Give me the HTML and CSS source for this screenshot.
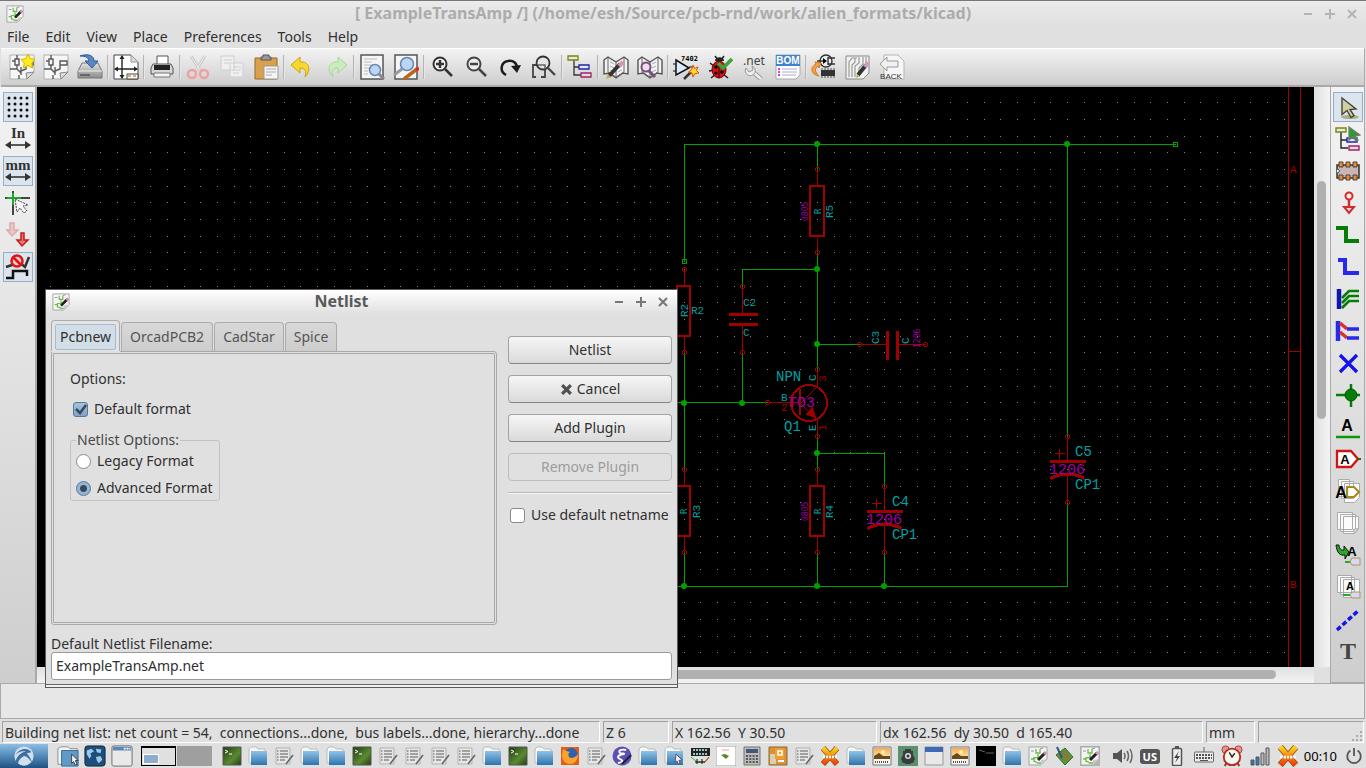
FILE: index.html
```html
<!DOCTYPE html>
<html lang="en">
<head>
<meta charset="utf-8">
<title>[ ExampleTransAmp /]</title>
<link rel="stylesheet" href="styles.css">
</head>
<body>
<svg class="defs" aria-hidden="true">
  <defs>
    <linearGradient id="gFolder" x1="0" y1="0" x2="0" y2="1"><stop offset="0" stop-color="#8fc3e6"/><stop offset="1" stop-color="#2f74ad"/></linearGradient>
    <linearGradient id="gTerm" x1="0" y1="0" x2="1" y2="1"><stop offset="0" stop-color="#1d3a12"/><stop offset=".6" stop-color="#5c8a30"/><stop offset="1" stop-color="#213d14"/></linearGradient>
    <linearGradient id="gX" x1="0" y1="0" x2="0" y2="1"><stop offset="0" stop-color="#ffd21a"/><stop offset="1" stop-color="#f03a10"/></linearGradient>
    <linearGradient id="gSky" x1="0" y1="0" x2="0" y2="1"><stop offset="0" stop-color="#f3a95c"/><stop offset="1" stop-color="#fbe3a0"/></linearGradient>
    <linearGradient id="gDisk" x1="0" y1="0" x2="0" y2="1"><stop offset="0" stop-color="#e2e2e2"/><stop offset="1" stop-color="#8c8c8c"/></linearGradient>
  </defs>
  <symbol id="kicad" viewBox="0 0 20 20"><path d="M1 1h18v12l-6 6H1z" fill="#f4f4f2" stroke="#a3a3a3"/><path d="M19 13l-6 6v-5z" fill="#ccc"/><path d="M8 3v4h4V3M10 8v3M6 11v5M6 13H3M6 12l5-1M6 15l4 2h3" fill="none" stroke="#6cba4c" stroke-width="1.300"/><path d="M12 3l3-1M3 5h3" stroke="#8b8bd0"/><path d="M10 14l7-7" stroke="#222" stroke-width="3"/><path d="M16 8l2-2" stroke="#d68bb4" stroke-width="3"/></symbol>
  <symbol id="sheet" viewBox="0 0 26 26"><path d="M1 1h24v17l-7 7H1z" fill="#f6f6f6" stroke="#b0b0b0"/><path d="M25 18l-7 7-1-6z" fill="#ddd" stroke="#888"/><path d="M3 7h3M8 1v4M6 5h4v6H6zM8 11v4M1 15h7l4 4M12 13v8M12 17l5-2V9M17 7h7v4h-7zM10 25v-4" fill="none" stroke="#5a5a5a" stroke-width="1.400"/></symbol>
  <symbol id="new" viewBox="0 0 26 26"><use href="#sheet" width="26" height="26"/><path d="M19 0l2.400 4.700 5 .7-3.700 3.600.9 5-4.600-2.500-4.600 2.500.9-5L12 5.400l5-.7z" fill="#ffee1c" stroke="#d9b300"/></symbol>
  <symbol id="save" viewBox="0 0 26 26"><path d="M5 9h16l4 8v7H1v-7z" fill="url(#gDisk)" stroke="#777"/><path d="M1 17h24" stroke="#eee"/><path d="M3 20h10v2H3z" fill="#666"/><path d="M3 2c9-3 14 0 14 5h4l-6 7-7-7h4c0-3-3-5-9-5z" fill="#5b87c0" stroke="#2c5a98"/></symbol>
  <symbol id="page" viewBox="0 0 26 26"><path d="M1 1h17l7 7v17H1z" fill="#fff" stroke="#444"/><path d="M18 1v7h7" fill="#ddd" stroke="#999"/><path d="M9 2v22M2 15h22" stroke="#222" stroke-width="1.400"/><path d="M9 1L6.500 5h5zM9 25l-2.500-4h5zM1 15l4-2.500v5zM25 15l-4-2.500v5z" fill="#222"/><path d="M14 20h11v5H14z" fill="#fff" stroke="#542"/><path d="M15 22h9" stroke="#b44" stroke-dasharray="3 2"/></symbol>
  <symbol id="print" viewBox="0 0 26 26"><path d="M8 2h11v10H8z" fill="#fff" stroke="#555"/><path d="M4 10h18l2 4v6H2v-6z" fill="#d8d8d8" stroke="#555"/><path d="M5 11h16v5H5z" fill="#222"/><path d="M5 19h16v4H5z" fill="#f5f5f5" stroke="#777"/></symbol>
  <symbol id="cut" viewBox="0 0 26 26"><path d="M6 2l10 16M20 2L10 18" stroke="#c9c9c9" stroke-width="3"/><path d="M6 2l10 16M20 2L10 18" stroke="#eee"/><circle cx="7" cy="20" r="4" fill="none" stroke="#f0a0a0" stroke-width="2.500"/><circle cx="19" cy="20" r="4" fill="none" stroke="#f0a0a0" stroke-width="2.500"/></symbol>
  <symbol id="copy" viewBox="0 0 26 26"><g fill="#efefef" stroke="#cfcfcf"><path d="M2 2h13v14H2zM11 9h13v14H11z"/><path d="M5 6h8M5 9h5M14 13h8M14 16h8M14 19h6"/></g></symbol>
  <symbol id="paste" viewBox="0 0 26 26"><path d="M2 4h22v21H2z" fill="#d9a14e" stroke="#94692a"/><path d="M8 6V3h2V1h6v2h2v3z" fill="#999" stroke="#555"/><path d="M11 12h14v13H11z" fill="#f5f5f5" stroke="#999"/><path d="M13 15h10M13 18h10M13 21h6" stroke="#aaa"/></symbol>
  <symbol id="undo" viewBox="0 0 26 26"><path d="M2 11l9-8v5c9-1 12 8 5 15 2-6 0-9-5-9v5z" fill="#f7d92c" stroke="#c9a214"/></symbol>
  <symbol id="redo" viewBox="0 0 26 26"><path d="M24 11l-9-8v5C6 7 3 16 10 23c-2-6 0-9 5-9v5z" fill="#c9ecb9" stroke="#a8d59a"/></symbol>
  <symbol id="find" viewBox="0 0 26 26"><path d="M2 1h22v24H2z" fill="#f5f5f5" stroke="#555" stroke-width="1.500"/><path d="M5 5h13M5 8h8M5 11h12M5 14h5M5 17h4M5 20h4" stroke="#bbb"/><circle cx="16" cy="16" r="5.500" fill="#bcd6f2" stroke="#6686b8" stroke-width="1.500"/><path d="M20 20l5 5" stroke="#888" stroke-width="3"/></symbol>
  <symbol id="replace" viewBox="0 0 26 26"><path d="M2 1h22v24H2z" fill="#f5f5f5" stroke="#555" stroke-width="1.500"/><path d="M9 15l-8 6" stroke="#999" stroke-width="3"/><circle cx="14" cy="10" r="6.500" fill="#bcd6f2" stroke="#6686b8" stroke-width="1.500"/><path d="M11 25l13-10" stroke="#b9671c" stroke-width="3.500"/><path d="M23 16l3-2" stroke="#e22" stroke-width="3.500"/></symbol>
  <symbol id="zin" viewBox="0 0 26 26"><circle cx="11" cy="10" r="6.500" fill="#f5f5f5" stroke="#333" stroke-width="2"/><path d="M16 15l7 7" stroke="#333" stroke-width="2.500"/><path d="M11 6v8M7 10h8" stroke="#333" stroke-width="2.500"/></symbol>
  <symbol id="zout" viewBox="0 0 26 26"><circle cx="11" cy="10" r="6.500" fill="#eee" stroke="#444" stroke-width="2"/><path d="M16 15l7 7" stroke="#444" stroke-width="2.500"/><path d="M7 10h8" stroke="#444" stroke-width="2.500"/></symbol>
  <symbol id="redraw" viewBox="0 0 26 26"><path d="M9 21C2 17 4 8 11 7c5-1 9 2 9 7" fill="none" stroke="#1b1b1b" stroke-width="2.500"/><path d="M14 12l10-1-4 8z" fill="#1b1b1b"/></symbol>
  <symbol id="fit" viewBox="0 0 26 26"><path d="M5 23H2V11h4M10 23h4V11" fill="none" stroke="#444" stroke-width="1.800"/><circle cx="12" cy="9" r="6.500" fill="#e6e6e6" fill-opacity=".8" stroke="#333" stroke-width="1.800"/><path d="M17 14l7 7" stroke="#444" stroke-width="2.300"/><path d="M7 11h7v4" fill="none" stroke="#666" stroke-width="1.500"/></symbol>
  <symbol id="tree" viewBox="0 0 26 26"><path d="M7 6v15h7M7 13h5" fill="none" stroke="#333" stroke-width="1.300"/><path d="M1 2h10v4H1z" fill="#dceaf7" stroke="#848400" stroke-width="1.300"/><path d="M12 11h10v4H12z" fill="#dceaf7" stroke="#2424a4" stroke-width="1.300"/><path d="M14 19h10v4H14z" fill="#dfdcf0" stroke="#a4245c" stroke-width="1.300"/></symbol>
  <symbol id="book" viewBox="0 0 26 26"><path d="M1 6l4-3 8 5 8-5 4 3v14l-5-1-7 5-7-5-5 1z" fill="#f2f2f2" stroke="#555" stroke-width="1.400"/><path d="M13 8v15M5 4v14l8 5 8-5V4" fill="none" stroke="#666"/><path d="M7 8l4 2M7 12l4 2M7 16l4 2M19 8l-4 2M19 12l-4 2M19 16l-4 2" stroke="#aaa"/></symbol>
  <symbol id="libedit" viewBox="0 0 26 26"><use href="#book" width="26" height="26"/><path d="M6 22L17 10" stroke="#333" stroke-width="4"/><path d="M16 12l4-4" stroke="#d891b7" stroke-width="4"/><path d="M3 25l2-5 3 3z" fill="#b6ad3a"/></symbol>
  <symbol id="libview" viewBox="0 0 26 26"><use href="#book" width="26" height="26"/><circle cx="9" cy="13" r="4.500" fill="#e8e0ea" stroke="#7b4f7b" stroke-width="2"/><path d="M12 17l6 6" stroke="#7b4f7b" stroke-width="3"/></symbol>
  <symbol id="annot" viewBox="0 0 26 26"><path d="M0 10h4M0 17h4M16 13h5" stroke="#111"/><path d="M3 6l13 8-13 7z" fill="#dceaff" stroke="#111" stroke-width="1.500"/><path d="M11 25l8-8" stroke="#333" stroke-width="2.500"/><path d="M20 11l1.500 3.500L25 13l-1.500 3.500L26 19l-4 .5L20 23l-1-4-3.500-1 3-2z" fill="#ffdf2c" stroke="#e04a12"/></symbol>
  <symbol id="bug" viewBox="0 0 26 26"><path d="M3 9l5 4M2 17l6-1M4 24l5-4M21 24l-5-4M8 2l3 4M17 2l-3 4" stroke="#222" stroke-width="1.500"/><ellipse cx="12" cy="15.500" rx="7" ry="8.500" fill="#d31414" stroke="#600"/><path d="M8 7c0-5 9-5 9 0z" fill="#222"/><path d="M12 7v17" stroke="#300"/><circle cx="9" cy="13" r="1.800"/><circle cx="15" cy="18" r="1.800"/><circle cx="9" cy="19" r="1.500"/><path d="M11 9l5 5 9-9" fill="none" stroke="#3aa53a" stroke-width="3.500"/></symbol>
  <symbol id="net" viewBox="0 0 26 26"><path d="M11 17l9 8" stroke="#999" stroke-width="4.500"/><path d="M11 17l9 8" stroke="#f0f0f0" stroke-width="2.500"/><path d="M5 14a5 5 0 1 0 6-2l1 4-4 2z" fill="#eee" stroke="#999"/></symbol>
  <symbol id="bom" viewBox="0 0 26 26"><path d="M1 1h24v20l-4 4H1z" fill="#fff" stroke="#aaa"/><path d="M1 1h24v11H1z" fill="#3f82cf"/><path d="M7 15h15M7 18h15M7 21h14" stroke="#aac"/><path d="M3 15h2M3 18h2M3 21h2" stroke="#c0c" stroke-width="1.500"/></symbol>
  <symbol id="cvpcb" viewBox="0 0 26 26"><circle cx="15" cy="7" r="6" fill="#eee" stroke="#333" stroke-width="1.400"/><path d="M6 7h8M17 3v8M24 4h-7M24 10h-7" fill="none" stroke="#333" stroke-width="1.400"/><path d="M12 4l4 3-4 3z"/><path d="M10 16h14v6H10z" fill="#333"/><path d="M11 22v2M14 22v2M17 22v2M20 22v2M23 22v2M11 14v2M14 14v2M17 14v2M20 14v2M23 14v2" stroke="#555"/><path d="M8 22c-9-2-9-9-3-12l-1-2 6 1-2 5-1-2c-4 3-3 6 1 10z" fill="#f0a04c" stroke="#d57814"/></symbol>
  <symbol id="pcbnew" viewBox="0 0 26 26"><path d="M1 2h23v17l-6 6H1z" fill="#f2f2f0" stroke="#888"/><path d="M4 23V8l3-4h5M7 23V11l3-3V4M10 23V12l4-3V3M14 23V14l4-4V3M21 3v6" fill="none" stroke="#999" stroke-width="1.200"/><path d="M13 21l8-10" stroke="#333" stroke-width="4"/><path d="M20 13l3-5" stroke="#cf9ac0" stroke-width="4"/><path d="M11 24l1-4 3 2z" fill="#b6ad3a"/></symbol>
  <symbol id="back" viewBox="0 0 26 26"><path d="M5 1h14l6 6v18H5z" fill="#f6f6f6" stroke="#b5b5b5"/><path d="M1 10l7-7v4h11v6H8v4z" fill="#f0f0f0" stroke="#999"/></symbol>

  <symbol id="grid" viewBox="0 0 26 26"><path d="M4 4h20M4 10h20M4 16h20M4 22h20" stroke="#111" stroke-width="3" stroke-linecap="round" stroke-dasharray="0 6"/></symbol>
  <symbol id="unit" viewBox="0 0 26 26"><path d="M4 19h18" stroke="#333" stroke-width="1.600"/><path d="M0 19l6-4v8zM26 19l-6-4v8z" fill="#333"/></symbol>
  <symbol id="cross" viewBox="0 0 26 26"><path d="M8 1v24M0 8h25" stroke="#444" stroke-width="2"/><path d="M8 3v12M2 8h14" stroke="#1fa62e" stroke-width="2"/><path d="M10 9l13 6-5 1 4 5-3 2-4-5-3 4z" fill="#f5f5f5" stroke="#444" stroke-dasharray="2 1"/></symbol>
  <symbol id="hidden" viewBox="0 0 26 26"><g opacity=".3"><path d="M5 1h4v7h4l-6 6-5-6h3z" fill="#e77" stroke="#c11c1c" stroke-width="1.500"/></g><path d="M16 11h3v7h4l-6 6-5-6h4z" fill="#e77" stroke="#c11c1c" stroke-width="1.500"/></symbol>
  <symbol id="anyang" viewBox="0 0 26 26"><path d="M1 13l6-2 7-3 6 5 4-10" fill="none" stroke="#333" stroke-width="2.500"/><circle cx="12" cy="7" r="5.500" fill="#eecccc" stroke="#e01414" stroke-width="2.500"/><path d="M8 3l8 8" stroke="#e01414" stroke-width="2.500"/><path d="M1 24h7v-7h14v5" fill="none" stroke="#111" stroke-width="2.500"/></symbol>

  <symbol id="arrow" viewBox="0 0 26 26"><ellipse cx="15" cy="23" rx="9" ry="2" fill="#a9ae7d"/><path d="M7 4l14 11-6 .5 4 6-3 2-4-7-5 4z" fill="#cfd0a2" stroke="#44443a" stroke-width="1.400"/></symbol>
  <symbol id="hier" viewBox="0 0 26 26"><path d="M6 5v17h7M6 14h6" fill="none" stroke="#222" stroke-width="1.400"/><path d="M1 2h10v4H1z" fill="#dceaf7" stroke="#848400" stroke-width="1.400"/><path d="M12 12h10v4H12z" fill="#dceaf7" stroke="#2424a4" stroke-width="1.400"/><path d="M14 20h10v4H14z" fill="#dfdcf0" stroke="#a4245c" stroke-width="1.400"/><path d="M14 1l11 8-5 1 3 4-2 1-3-4-4 3z" fill="#25a02c" stroke="#777" stroke-width="1.300"/></symbol>
  <symbol id="comp" viewBox="0 0 26 26"><path d="M2 7h22v13H2z" fill="#c9b5b5" stroke="#333" stroke-width="1.500"/><g fill="#f08a24" stroke="#444"><path d="M4 4h4v5H4zM11 4h4v5h-4zM18 4h4v5h-4zM4 17h4v5H4zM11 17h4v5h-4zM18 17h4v5h-4z"/></g><path d="M2 11c3 0 3 4 0 4" fill="#fff" stroke="#333"/></symbol>
  <symbol id="power" viewBox="0 0 26 26"><circle cx="14" cy="6" r="3.500" fill="#fbe9e9" stroke="#d22d2d" stroke-width="2"/><path d="M14 10v8" stroke="#d22d2d" stroke-width="2.500"/><path d="M9 17h10l-5 6z" fill="#dde" stroke="#d22d2d" stroke-width="2"/></symbol>
  <symbol id="wire" viewBox="0 0 26 26"><path d="M1 6h10v13h13" fill="none" stroke="#067d06" stroke-width="4"/></symbol>
  <symbol id="bus" viewBox="0 0 26 26"><path d="M3 6h7v13h14" fill="none" stroke="#2929ee" stroke-width="4"/></symbol>
  <symbol id="w2b" viewBox="0 0 26 26"><path d="M4 3v20" stroke="#1414b4" stroke-width="4.500"/><path d="M7 12l7-7h10M7 17l7-7h10M7 22l7-7h10" fill="none" stroke="#067d06" stroke-width="2.700"/></symbol>
  <symbol id="b2b" viewBox="0 0 26 26"><path d="M3 3v20" stroke="#2929ee" stroke-width="4.500"/><path d="M5 5l7 6M5 14l7 6" stroke="#d93030" stroke-width="3.500"/><path d="M12 11h12M12 20h12" stroke="#2929ee" stroke-width="3.500"/></symbol>
  <symbol id="noconn" viewBox="0 0 26 26"><path d="M5 5l17 17M22 5L5 22" stroke="#1010f0" stroke-width="3.200"/></symbol>
  <symbol id="junc" viewBox="0 0 26 26"><path d="M1 13h24M16 2v23" stroke="#067d06" stroke-width="2.500"/><circle cx="16" cy="13" r="6" fill="#067d06" stroke="#045404"/></symbol>
  <symbol id="label" viewBox="0 0 26 26"><path d="M1 23h24" stroke="#0a980a" stroke-width="2.500"/></symbol>
  <symbol id="glabel" viewBox="0 0 26 26"><path d="M2 5h14l7 8-7 8H2z" fill="#fff" stroke="#d01414" stroke-width="2.300"/><path d="M23 13h3" stroke="#067d06" stroke-width="2"/></symbol>
  <symbol id="hlabel" viewBox="0 0 26 26"><path d="M3.500 1.500h11v17h-11zM6.500 3.500h12v17h-12zM9.500 5.500h15v14l-5 5h-10z" fill="#fcfcfc" stroke="#aaa"/><path d="M12 9h7l5 5-5 5h-7z" fill="#fff" stroke="#a88a20" stroke-width="2.200"/></symbol>
  <symbol id="sheets" viewBox="0 0 26 26"><path d="M2.500 2.500h15v17h-15zM5.500 4.500h15v17h-15zM8.500 6.500h15v12l-4 5h-11z" fill="#fcfcfc" stroke="#aaa"/><path d="M23.500 18.500l-4 5-1-4z" fill="#ddd" stroke="#aaa"/></symbol>
  <symbol id="import" viewBox="0 0 26 26"><path d="M1 3c1 8 4 11 9 10v4l4-7-5-6v4C6 9 4 6 4 3z" fill="#28a828" stroke="#111"/><path d="M10 20h8" stroke="#28a828" stroke-width="2"/><path d="M17 16h8v7h-8l-2-3z" fill="#d8d8f6" stroke="#a89a50"/></symbol>
  <symbol id="spin" viewBox="0 0 26 26"><path d="M2.500 1.500h14v17h-14zM5.500 3.500h14v17h-14zM8.500 5.500h16v18h-16z" fill="#fcfcfc" stroke="#aaa"/><path d="M8 21h9" stroke="#28a828" stroke-width="2"/><path d="M17 18h8v6h-8l-2-3z" fill="#d8d8f6" stroke="#a89a50"/></symbol>
  <symbol id="dash" viewBox="0 0 26 26"><path d="M2 24L24 4" stroke="#1515ee" stroke-width="3.500" stroke-dasharray="5 2.500"/></symbol>

  <symbol id="term" viewBox="0 0 20 20"><path d="M1 1h18v18H1z" fill="url(#gTerm)" stroke="#555"/><path d="M3 4l3 1.500L3 7M7 8h3" fill="none" stroke="#fff"/></symbol>
  <symbol id="black" viewBox="0 0 20 20"><path d="M0 0h20v20H0z" fill="#000"/><path d="M3 4l6 2M10 7h8" stroke="#666"/></symbol>
  <symbol id="folder" viewBox="0 0 20 20"><path d="M1 17V3l2-2h5l2 2h7v14z" fill="#f6f6f6" stroke="#bbb"/><path d="M3 5h16v14H3z" fill="url(#gFolder)"/></symbol>
  <symbol id="folderc" viewBox="0 0 20 20"><use href="#folder" width="20" height="20"/><path d="M12 8l6 6-3 .5 1 3-2 .5-1-3-2 1z" fill="#eee" stroke="#557"/></symbol>
  <symbol id="note" viewBox="0 0 20 20"><path d="M2 2h14v16H2z" fill="#e6e6e6" stroke="#b3b3b3"/><path d="M6 5h8M6 8h8M6 11h8M6 14h5" stroke="#8a8a8a" stroke-width="1.300"/><path d="M3 5h1.500M3 8h1.500M3 11h1.500M3 14h1.500" stroke="#555"/><path d="M12 18l7-9" stroke="#666" stroke-width="1.600"/></symbol>
  <symbol id="fox" viewBox="0 0 20 20"><path d="M1 1h18v18H1z" fill="#e75a1c"/><circle cx="11" cy="9" r="7" fill="#2d62b0"/><path d="M3 3c3 2 4 2 7 3-2 1-2 3-1 5 2 2 6 1 9-3 0 6-3 10-8 10S2 14 2 9z" fill="#f9a32a"/></symbol>
  <symbol id="emacs" viewBox="0 0 20 20"><circle cx="10" cy="10" r="9.500" fill="#5a4fb5"/><path d="M14 4c-6-1-8 1-6 3 2 1 5 0 4 1-6 1-8 3-4 5s3 3-2 4" fill="none" stroke="#fff" stroke-width="1.800"/><path d="M10 18l9-9" stroke="#223" stroke-width="2"/></symbol>
  <symbol id="chip" viewBox="0 0 20 20"><path d="M1 2h19v8H1z" fill="#222"/><path d="M3 4h15M3 8h15" stroke="#bff" stroke-width="1.500" stroke-dasharray="2 1"/><path d="M1 11l6 5h8l4-5" fill="none" stroke="#2b2"/><path d="M15 16l4-5" stroke="#d22"/><path d="M7 13v5M12 13v5M5 16h10" stroke="#111"/></symbol>
  <symbol id="white" viewBox="0 0 20 20"><path d="M0 0h20v20H0z" fill="#fff" stroke="#999"/><path d="M6 4h7" stroke="#e99"/><path d="M5 9l4-1 4 2-3 3z" fill="#5a8a2c"/></symbol>
  <symbol id="calc" viewBox="0 0 20 20"><path d="M2 1h16v18H2z" fill="#bbb" stroke="#777"/><path d="M4 3h12v4H4z" fill="#3f5a78"/><path d="M4 10h13M4 13h13M4 16h13" stroke="#555" stroke-width="2" stroke-dasharray="2 1.300"/></symbol>
  <symbol id="orange" viewBox="0 0 20 20"><path d="M1 1h18v18H1z" fill="#d9923a" stroke="#8c6a35"/><path d="M2 8h6v10H2z" fill="#dccfae"/><path d="M7 2h9v11H7z" fill="#f0a030"/><path d="M10 5h4v4h-4z" fill="none" stroke="#fff" stroke-width="1.500"/><path d="M10 15h6" stroke="#fff" stroke-width="2"/></symbol>
  <symbol id="xcircuit" viewBox="0 0 20 20"><path d="M3 2l14 16M17 2L3 18" stroke="#8a5a10" stroke-width="6"/><path d="M3 2l14 16M17 2L3 18" stroke="url(#gX)" stroke-width="4.500"/><path d="M3 11h14" stroke="#fff" stroke-width="2.500" stroke-dasharray="2 1"/></symbol>
  <symbol id="pic" viewBox="0 0 20 20"><path d="M1 1h18v18H1z" fill="#f3f3f3" stroke="#777"/><path d="M2 2h16v9H2z" fill="url(#gSky)"/><circle cx="11" cy="6" r="2" fill="#fff3a8"/><path d="M2 10l5-3 4 3h7v3H2z" fill="#6b4a18"/><path d="M3 16h14" stroke="#555" stroke-width="2" stroke-dasharray="1 1"/></symbol>
  <symbol id="green" viewBox="0 0 20 20"><path d="M0 0h20v20H0z" fill="#5c8f6d"/><path d="M5 9V5h2V3h6v2h2v4l2 4-2 4h-2v1H7v-1H5l-2-4z" fill="#363f3b"/><circle cx="10" cy="10" r="3" fill="#ddd"/><circle cx="10" cy="10" r="1.500" fill="#333"/></symbol>
  <symbol id="win" viewBox="0 0 20 20"><path d="M1 1h18v18H1z" fill="#e8e8e8" stroke="#999"/><path d="M1 1h18v5H1z" fill="#3e69b4"/></symbol>
  <symbol id="pcb" viewBox="0 0 20 20"><path d="M2 9l9-7 8 9-8 8z" fill="#5d913b" stroke="#3e6a26"/><path d="M6 10l9 1M9 6l6 8" stroke="#a96b32" stroke-width="1.500"/><path d="M3 1l5 11" stroke="#34567d" stroke-width="2"/></symbol>
  <symbol id="files" viewBox="0 0 24 24"><path d="M1 21V4l3-2h8l2 2h8v17z" fill="#f5f5f5" stroke="#888"/><path d="M5 6h18v17H5z" fill="#5f9ac8" stroke="#2e6898"/><path d="M16 10v10l2-2 2 4 2-1-2-4h3z" fill="#fff" stroke="#333"/></symbol>
  <symbol id="globe" viewBox="0 0 24 24"><rect x="1" y="1" width="22" height="22" rx="3" fill="#1d4f7d" stroke="#123"/><path d="M3 6l5-2 3 3-4 2 1 3-2 3-3-5zM13 4l6 1-1 4-4-1zM13 13l5-1 2 4-4 4-2-3z" fill="#9fc8e2"/></symbol>
  <symbol id="window" viewBox="0 0 24 24"><rect x="1" y="1" width="22" height="22" rx="2" fill="#e9e9e9" stroke="#666"/><path d="M2 2h20v4H2z" fill="#5d88b4"/><path d="M14 4h7" stroke="#fff" stroke-width="2" stroke-dasharray="2 1"/></symbol>
  <symbol id="lubuntu" viewBox="0 0 24 24"><circle cx="12" cy="12" r="10.500" fill="#cfe0ef"/><path d="M2 19C5 11 9 8 14 7c-5-1-9 1-11 4 3-7 13-9 17-3l-5 1c3 3 5 7 6 11-3-5-6-8-9-8-4 2-6 5-7 9z" fill="#3f6f9f"/></symbol>
  <symbol id="speaker" viewBox="0 0 20 20"><path d="M0 7h4l5-4v14l-5-4H0z" fill="#555"/><path d="M11 7q2 3 0 6M14 5q3 5 0 10M17 3q4 7 0 14" fill="none" stroke="#666" stroke-width="1.500"/></symbol>
  <symbol id="battery" viewBox="0 0 20 20"><path d="M8 0h4v3H8z" fill="#555"/><rect x="5.500" y="2.500" width="9" height="17" rx="1" fill="#eee" stroke="#555" stroke-width="1.500"/><path d="M12 5l-5 7h3l-2 5 5-7h-3z" fill="#444"/></symbol>
  <symbol id="kbd" viewBox="0 0 20 20"><path d="M10 6V1" stroke="#666"/><rect x=".5" y="6" width="19" height="10" rx="1" fill="#eee" stroke="#666"/><path d="M2 9h16M2 12h16" stroke="#555" stroke-width="1.800" stroke-dasharray="2 1"/><path d="M6 14.500h8" stroke="#555"/></symbol>
  <symbol id="alarm" viewBox="0 0 24 24"><circle cx="5" cy="5" r="4" fill="#d99" stroke="#b33"/><circle cx="19" cy="5" r="4" fill="#d99" stroke="#b33"/><path d="M6 20l-2 3M18 20l2 3" stroke="#a22" stroke-width="2"/><circle cx="12" cy="13" r="9" fill="#fbf5f0" stroke="#b02e22" stroke-width="2"/><path d="M9 8l3 5 3-4" fill="none" stroke="#222" stroke-width="1.500"/></symbol>
  <symbol id="signal" viewBox="0 0 20 20"><g stroke="#555"><path d="M1 14h3v5H1zM6 11h3v8H6z" fill="#3f74c0"/><path d="M11 7h3v12h-3zM16 2h3v17h-3z" fill="#bbb"/></g></symbol>
  <symbol id="off" viewBox="0 0 20 20"><path d="M6 4a7.500 7.500 0 1 0 8 0" fill="none" stroke="#555" stroke-width="2"/><path d="M10 1v9" stroke="#555" stroke-width="2"/></symbol>
  <symbol id="wmin" viewBox="0 0 12 12"><path d="M2 6h8" stroke="currentColor" stroke-width="2"/></symbol>
  <symbol id="wmax" viewBox="0 0 12 12"><path d="M1 6h10M6 1v10" stroke="currentColor" stroke-width="2"/></symbol>
  <symbol id="wclose" viewBox="0 0 12 12"><path d="M2 2l8 8M10 2l-8 8" stroke="currentColor" stroke-width="2"/></symbol>
  <symbol id="cancel" viewBox="0 0 12 12"><path d="M2 2l8 8M10 2l-8 8" stroke="#505050" stroke-width="3"/></symbol>
</svg>

<header class="titlebar">
  <svg class="app-icon"><use href="#kicad"/></svg>
  <h1>[ ExampleTransAmp /] (/home/esh/Source/pcb-rnd/work/alien_formats/kicad)</h1>
  <div class="win-buttons">
    <button aria-label="Minimize"><svg><use href="#wmin"/></svg></button>
    <button aria-label="Maximize"><svg><use href="#wmax"/></svg></button>
    <button aria-label="Close"><svg><use href="#wclose"/></svg></button>
  </div>
</header>

<nav class="menubar">
  <button>File</button><button>Edit</button><button>View</button><button>Place</button><button>Preferences</button><button>Tools</button><button>Help</button>
</nav>

<div class="toolbar">
  <button aria-label="New"><svg><use href="#new"/></svg></button>
  <button aria-label="Open"><svg><use href="#sheet"/></svg></button>
  <button aria-label="Save"><svg><use href="#save"/></svg></button>
  <i></i>
  <button aria-label="Page settings"><svg><use href="#page"/></svg></button>
  <i></i>
  <button aria-label="Print"><svg><use href="#print"/></svg></button>
  <i></i>
  <button aria-label="Cut"><svg><use href="#cut"/></svg></button>
  <button aria-label="Copy"><svg><use href="#copy"/></svg></button>
  <button aria-label="Paste"><svg><use href="#paste"/></svg></button>
  <i></i>
  <button aria-label="Undo"><svg><use href="#undo"/></svg></button>
  <button aria-label="Redo"><svg><use href="#redo"/></svg></button>
  <i></i>
  <button aria-label="Find"><svg><use href="#find"/></svg></button>
  <button aria-label="Replace"><svg><use href="#replace"/></svg></button>
  <i></i>
  <button aria-label="Zoom in"><svg><use href="#zin"/></svg></button>
  <button aria-label="Zoom out"><svg><use href="#zout"/></svg></button>
  <button aria-label="Redraw"><svg><use href="#redraw"/></svg></button>
  <button aria-label="Zoom to fit"><svg><use href="#fit"/></svg></button>
  <i></i>
  <button aria-label="Hierarchy"><svg><use href="#tree"/></svg></button>
  <i></i>
  <button aria-label="Library editor"><svg><use href="#libedit"/></svg></button>
  <button aria-label="Library browser"><svg><use href="#libview"/></svg></button>
  <i></i>
  <button aria-label="Annotate"><svg><use href="#annot"/><text x="8" y="7" class="ic-7402">7402</text></svg></button>
  <button aria-label="Rules check"><svg><use href="#bug"/></svg></button>
  <button aria-label="Netlist"><svg><use href="#net"/><text x="2" y="11" class="ic-net">.net</text></svg></button>
  <button aria-label="Bill of materials"><svg><use href="#bom"/><text x="13" y="10" text-anchor="middle" class="ic-bom">BOM</text></svg></button>
  <i></i>
  <button aria-label="Footprints"><svg><use href="#cvpcb"/></svg></button>
  <button aria-label="Board editor"><svg><use href="#pcbnew"/></svg></button>
  <button aria-label="Back import"><svg><use href="#back"/><text x="12" y="25" text-anchor="middle" class="ic-back">BACK</text></svg></button>
</div>

<main class="workspace">
  <div class="side side-left">
    <button class="on" aria-label="Grid"><svg><use href="#grid"/></svg></button>
    <button aria-label="Inches"><svg><use href="#unit"/><text x="13" y="12" text-anchor="middle" class="ic-unit">In</text></svg></button>
    <button class="on" aria-label="Millimetres"><svg><use href="#unit"/><text x="13" y="12" text-anchor="middle" class="ic-unit">mm</text></svg></button>
    <button aria-label="Cursor shape"><svg><use href="#cross"/></svg></button>
    <button aria-label="Hidden pins"><svg><use href="#hidden"/></svg></button>
    <button class="on" aria-label="Line direction"><svg><use href="#anyang"/></svg></button>
  </div>

  <div class="view">
    <svg class="canvas" role="img" aria-label="Schematic">
      <defs>
        <pattern id="dots" width="50" height="50" patternUnits="userSpaceOnUse">
          <path d="M0 2h1v1H0zM17 2h1v1h-1zM34 2h1v1h-1zM0 19h1v1H0zM17 19h1v1h-1zM34 19h1v1h-1zM0 36h1v1H0zM17 36h1v1h-1zM34 36h1v1h-1z" fill="#848484"/>
        </pattern>
      </defs>
      <g transform="translate(-37 -87)">
        <rect width="4000" height="4000" fill="url(#dots)"/>
        <path class="frame" d="M1288.500 87V3000M1300.500 87V3000M1288 351.500h12"/>
        <text class="frame-t" x="1290" y="173">A</text>
        <text class="frame-t" x="1290" y="588">B</text>
        <g transform="translate(.5 .5)">
          <path class="wire" d="M684 261V144H1175M1067 144V436M1067 502V586H677M817 144V169M817 252V369M742 286V269H817M742 352V402M817 344H859M677 402H767M684 352V469M684 552V586M817 436V469M817 453H884V486M817 552V586M884 552V586M682 259h4v4h-4zM1173 142h4v4h-4z"/>
          <path class="pin" d="M684 269V286M684 336V352M684 469V486M684 536V552M817 169V186M817 237V252M817 469V486M817 536V552M742 286V314M742 324V352M859 344H887M898 344H925M767 402H800M817 369V386L800 403L817 420V436M884 486V511M884 524V552M1067 436V461M1067 474V502M871 503h10M876 498v10M1054 453h10M1059 448v10"/>
          <path class="plate" d="M728 314h29M728 324h29M887 330v29M897 330v29M866 511h36M867 528q17-9 34 0M1049 461h36M1050 478q17-9 34 0"/>
          <path class="fill" d="M805 414l7-8 4 12z"/>
          <g class="end"><circle cx="684" cy="269" r="2"/><circle cx="684" cy="352" r="2"/><circle cx="684" cy="469" r="2"/><circle cx="684" cy="552" r="2"/><circle cx="817" cy="169" r="2"/><circle cx="817" cy="252" r="2"/><circle cx="817" cy="369" r="2"/><circle cx="817" cy="436" r="2"/><circle cx="817" cy="469" r="2"/><circle cx="817" cy="552" r="2"/><circle cx="742" cy="286" r="2"/><circle cx="742" cy="352" r="2"/><circle cx="859" cy="344" r="2"/><circle cx="925" cy="344" r="2"/><circle cx="767" cy="402" r="2"/><circle cx="884" cy="486" r="2"/><circle cx="884" cy="552" r="2"/><circle cx="1067" cy="436" r="2"/><circle cx="1067" cy="502" r="2"/></g>
        </g>
        <path class="body" d="M677 286h13v50h-13zM677 486h13v50h-13zM810 186h14v50h-14zM810 486h14v50h-14zM800 389V415"/>
        <circle class="body" cx="809" cy="403" r="18"/>
        <g class="dot"><circle cx="817" cy="144" r="3"/><circle cx="1067" cy="144" r="3"/><circle cx="817" cy="269" r="3"/><circle cx="817" cy="344" r="3"/><circle cx="684" cy="403" r="3"/><circle cx="742" cy="403" r="3"/><circle cx="817" cy="453" r="3"/><circle cx="684" cy="586" r="3"/><circle cx="817" cy="586" r="3"/><circle cx="884" cy="586" r="3"/></g>
        <g class="ref">
          <text class="t11" x="691" y="314">R2</text>
          <text class="t11" transform="translate(688 317) rotate(-90)">R2</text>
          <text class="t11" transform="translate(700 518) rotate(-90)">R3</text>
          <text class="t9" transform="translate(687 514) rotate(-90)">R</text>
          <text class="t11" transform="translate(833 218) rotate(-90)">R5</text>
          <text class="t9" transform="translate(821 214) rotate(-90)">R</text>
          <text class="t11" transform="translate(833 518) rotate(-90)">R4</text>
          <text class="t9" transform="translate(821 514) rotate(-90)">R</text>
          <text class="t11" x="743" y="306">C2</text>
          <text class="t11" x="743" y="336">C</text>
          <text class="t11" transform="translate(879 344) rotate(-90)">C3</text>
          <text class="t11" transform="translate(909 344) rotate(-90)">C</text>
          <text class="t14" x="776" y="381">NPN</text>
          <text class="t14" x="784" y="431">Q1</text>
          <text class="t11" x="781" y="401">B</text>
          <text class="t11" transform="translate(816 381) rotate(-90)">C</text>
          <text class="t11" transform="translate(816 431) rotate(-90)">E</text>
          <text class="t14" x="892" y="506">C4</text>
          <text class="t14" x="892" y="539">CP1</text>
          <text class="t14" x="1075" y="456">C5</text>
          <text class="t14" x="1075" y="489">CP1</text>
        </g>
        <g class="num">
          <text class="t11" x="781" y="411">2</text>
          <text class="t11" transform="translate(826 382) rotate(-90)">3</text>
          <text class="t11" transform="translate(826 431) rotate(-90)">1</text>
        </g>
        <g class="foot">
          <text class="t8" transform="translate(808 221) rotate(-90)">0805</text>
          <text class="t8" transform="translate(808 521) rotate(-90)">0805</text>
          <text class="t8" transform="translate(920 348) rotate(-90)">1206</text>
          <text class="t15" x="788" y="407">TO3</text>
          <text class="t15" x="866" y="524">1206</text>
          <text class="t15" x="1049" y="474">1206</text>
        </g>
      </g>
    </svg>
    <div class="vscroll"><span></span></div>
    <div class="hscroll"><span></span></div>
    <div class="corner"></div>
  </div>

  <div class="side side-right">
    <button class="on" aria-label="Select"><svg><use href="#arrow"/></svg></button>
    <button aria-label="Navigate hierarchy"><svg><use href="#hier"/></svg></button>
    <button aria-label="Place component"><svg><use href="#comp"/></svg></button>
    <button aria-label="Place power port"><svg><use href="#power"/></svg></button>
    <button aria-label="Place wire"><svg><use href="#wire"/></svg></button>
    <button aria-label="Place bus"><svg><use href="#bus"/></svg></button>
    <button aria-label="Wire to bus entry"><svg><use href="#w2b"/></svg></button>
    <button aria-label="Bus to bus entry"><svg><use href="#b2b"/></svg></button>
    <button aria-label="No connection"><svg><use href="#noconn"/></svg></button>
    <button aria-label="Junction"><svg><use href="#junc"/></svg></button>
    <button aria-label="Net name"><svg><use href="#label"/><text x="12" y="17" text-anchor="middle" class="ic-a16">A</text></svg></button>
    <button aria-label="Global label"><svg><use href="#glabel"/><text x="10" y="18" text-anchor="middle" class="ic-a13">A</text></svg></button>
    <button aria-label="Hierarchical label"><svg><use href="#hlabel"/><text x="6" y="20" text-anchor="middle" class="ic-a16">A</text></svg></button>
    <button aria-label="Hierarchical sheet"><svg><use href="#sheets"/></svg></button>
    <button aria-label="Import pin"><svg><use href="#import"/><text x="17" y="14" text-anchor="middle" class="ic-a13">A</text></svg></button>
    <button aria-label="Sheet pin"><svg><use href="#spin"/><text x="15" y="16" text-anchor="middle" class="ic-a11">A</text></svg></button>
    <button aria-label="Graphic line"><svg><use href="#dash"/></svg></button>
    <button aria-label="Text"><svg><text x="13" y="21" text-anchor="middle" class="ic-t">T</text></svg></button>
  </div>
</main>

<div class="message-panel"></div>

<div class="statusbar">
  <span>Building net list: net count = 54,&nbsp; connections...done,&nbsp; bus labels...done, hierarchy...done</span>
  <span>Z 6</span>
  <span>X 162.56&nbsp; Y 30.50</span>
  <span>dx 162.56&nbsp; dy 30.50&nbsp; d 165.40</span>
  <span>mm</span>
  <span class="last"><svg class="grip" viewBox="0 0 12 12"><path d="M10 1v2M10 5v2M6 5v2M10 9v2M6 9v2M2 9v2" stroke="#aaa" stroke-width="2"/></svg></span>
</div>

<footer class="taskbar">
  <button class="start" aria-label="Menu"><svg><use href="#lubuntu"/></svg></button>
  <div class="launch">
    <button aria-label="Files"><svg><use href="#files"/></svg></button>
    <button aria-label="Browser"><svg><use href="#globe"/></svg></button>
    <button aria-label="Show desktop"><svg><use href="#window"/></svg></button>
  </div>
  <div class="pager"><span class="desk current"><b></b></span><span class="desk"></span></div>
  <div class="tasks">
    <svg><use href="#term"/></svg><svg><use href="#folder"/></svg><svg><use href="#note"/></svg><svg><use href="#folder"/></svg><svg><use href="#folder"/></svg><svg><use href="#term"/></svg><svg><use href="#note"/></svg><svg><use href="#note"/></svg><svg><use href="#note"/></svg><svg><use href="#note"/></svg><svg><use href="#folder"/></svg><svg><use href="#term"/></svg><svg><use href="#folder"/></svg><svg><use href="#fox"/></svg><svg><use href="#note"/></svg><svg><use href="#emacs"/></svg><svg><use href="#folder"/></svg><svg><use href="#folderc"/></svg><svg><use href="#chip"/></svg><svg><use href="#white"/></svg><svg><use href="#calc"/></svg><svg><use href="#orange"/></svg><svg><use href="#note"/></svg><svg><use href="#xcircuit"/></svg><svg><use href="#folder"/></svg><svg><use href="#pic"/></svg><svg><use href="#green"/></svg><svg><use href="#win"/></svg><svg><use href="#pic"/></svg><svg><use href="#black"/></svg><svg><use href="#folder"/></svg><svg><use href="#kicad"/></svg><svg><use href="#pcb"/></svg><svg class="active"><use href="#kicad"/></svg>
  </div>
  <div class="tray">
    <svg><use href="#speaker"/></svg>
    <span class="layout">US</span>
    <svg><use href="#battery"/></svg>
    <svg><use href="#kbd"/></svg>
    <svg class="big"><use href="#alarm"/></svg>
    <svg><use href="#signal"/></svg>
    <svg class="big"><use href="#xcircuit"/></svg>
  </div>
  <time>00:10</time>
  <button class="off" aria-label="Shut down"><svg><use href="#off"/></svg></button>
</footer>

<section class="dialog" role="dialog" aria-labelledby="dlg-title">
  <header class="dlg-title">
    <svg class="app-icon"><use href="#kicad"/></svg>
    <h2 id="dlg-title">Netlist</h2>
    <div class="win-buttons">
      <button aria-label="Minimize"><svg><use href="#wmin"/></svg></button>
      <button aria-label="Maximize"><svg><use href="#wmax"/></svg></button>
      <button aria-label="Close"><svg><use href="#wclose"/></svg></button>
    </div>
  </header>
  <div class="dlg-main">
    <div class="book">
      <div class="tabs" role="tablist">
        <button class="tab selected" role="tab" aria-selected="true"><span>Pcbnew</span></button>
        <button class="tab" role="tab">OrcadPCB2</button>
        <button class="tab" role="tab">CadStar</button>
        <button class="tab" role="tab">Spice</button>
      </div>
      <div class="panel">
        <p>Options:</p>
        <label class="choice"><input type="checkbox" checked>Default format</label>
        <fieldset>
          <legend>Netlist Options:</legend>
          <label class="choice"><input type="radio" name="fmt">Legacy Format</label>
          <label class="choice"><input type="radio" name="fmt" checked>Advanced Format</label>
        </fieldset>
      </div>
    </div>
    <div class="actions">
      <button>Netlist</button>
      <button><svg><use href="#cancel"/></svg>Cancel</button>
      <button>Add Plugin</button>
      <button disabled>Remove Plugin</button>
      <hr>
      <label class="choice"><input type="checkbox">Use default netname</label>
    </div>
  </div>
  <div class="filename">
    <label for="fname">Default Netlist Filename:</label>
    <input id="fname" type="text" value="ExampleTransAmp.net">
  </div>
</section>
</body>
</html>
```

FILE: styles.css
```css
* { box-sizing: border-box; }

body {
  margin: 0;
  height: 100vh;
  display: flex;
  flex-direction: column;
  overflow: hidden;
  background: #e0e0e0;
  color: #303030;
  font: 14px/20px "Noto Sans", "Open Sans", sans-serif;
}

button, input { font: inherit; color: inherit; }
button { border: 0; background: none; padding: 0; }
svg { display: block; flex: none; }
.defs { position: absolute; width: 0; height: 0; }

.titlebar {
  display: flex;
  align-items: center;
  height: 26px;
  padding: 0 8px 0 6px;
  border-top: 1px solid #777;
  background: linear-gradient(#ebebeb, #e0e0e0);
}
.app-icon { width: 18px; height: 18px; }
h1, h2 {
  flex: 1;
  margin: 0;
  text-align: center;
  font-size: 16px;
  line-height: 18px;
  font-weight: 700;
  padding-bottom: 2px;
}
h1 { color: #acacac; }
.win-buttons { display: flex; gap: 10px; color: #b4b4b4; }
.win-buttons svg { width: 12px; height: 12px; }

.menubar { display: flex; gap: 16px; height: 22px; padding: 0 7px; align-items: center; }

.toolbar {
  display: flex;
  align-items: center;
  height: 39px;
  margin: 0 1px;
  padding-left: 4px;
  border-top: 1px solid #fff;
  border-right: 1px solid #aaa;
  border-bottom: 2px solid #a9a9a9;
  background: linear-gradient(#f3f3f3, #cecece);
}
.toolbar button { width: 34px; height: 34px; display: grid; place-items: center; }
.toolbar svg, .side svg { width: 26px; height: 26px; overflow: visible; }
.toolbar i { width: 2px; height: 24px; border-left: 1px solid #b5b5b5; border-right: 1px solid #e8e8e8; }

.workspace { flex: 1; display: flex; min-height: 0; }
.side {
  display: flex;
  flex-direction: column;
  gap: 2px;
  padding-top: 5px;
  background: linear-gradient(to bottom, #f3f3f3, #cecece);
}
.side button { width: 30px; height: 30px; display: grid; place-items: center; }
.side .on { border: 1px solid #8fb0cd; background: #dce5ee; }
.side-left { padding-left: 3px; padding-right: 2px; border-right: 2px solid #a9a9a9; }
.side-right { padding-left: 2px; padding-right: 1px; border: solid #a9a9a9; border-width: 0 1px 1px; margin-right: 1px; }

.view { flex: 1; min-width: 0; display: grid; grid-template-columns: 1fr 16px; grid-template-rows: 1fr 16px; }
.canvas { width: 100%; height: 100%; background: #000; overflow: hidden; }
.vscroll { padding-left: 3px; background: linear-gradient(to right, #e0e0e0, #f4f4f4); }
.vscroll span { display: block; width: 9px; height: 41%; margin-top: 94px; border-radius: 5px; background: #b0b0b0; }
.hscroll { display: flex; align-items: flex-start; padding-top: 3px; background: linear-gradient(#e0e0e0, #f4f4f4); }
.hscroll span { width: 85%; height: 9px; margin-left: 12%; border-radius: 5px; background: #b0b0b0; }

.wire, .pin, .body, .plate, .end, .frame { fill: none; shape-rendering: crispEdges; }
.wire { stroke: #00a000; }
.dot { fill: #00a000; }
.pin, .end, .frame { stroke: #a00000; }
.body { stroke: #a00000; stroke-width: 2; }
.plate { stroke: #a00000; stroke-width: 3; }
.fill, .num, .frame-t { fill: #a00000; }
.ref { fill: #00a0a0; }
.foot { fill: #a000a0; }
.canvas text { font-family: "Liberation Mono", monospace; }
.canvas .t8 { font-family: "DejaVu Sans Mono", monospace; font-size: 8px; }
.canvas .t9 { font-family: "DejaVu Sans Mono", monospace; font-size: 9px; }
.canvas .t11, .canvas .frame-t { font-size: 11px; }
.canvas .t14 { font-size: 14px; }
.canvas .t15 { font-size: 15px; }

.ic-7402 { font: 700 7px "DejaVu Sans Mono", monospace; }
.ic-net { font: 12px "Noto Sans", sans-serif; fill: #444; }
.ic-bom { font: 700 10px "Liberation Sans", sans-serif; fill: #fff; }
.ic-back { font: 8px "Liberation Sans", sans-serif; fill: #333; }
.ic-unit { font: 700 15px "Liberation Serif", serif; fill: #333; }
.ic-a16 { font: 700 16px "Liberation Sans", sans-serif; }
.ic-a13 { font: 700 13px "Liberation Sans", sans-serif; }
.ic-a11 { font: 700 11px "Liberation Sans", sans-serif; }
.ic-t { font: 700 24px "Liberation Serif", serif; fill: #444; }

.message-panel { height: 36px; margin-right: 1px; border: 1px solid #a9a9a9; background: #e7e7e7; }

.statusbar {
  display: grid;
  grid-template-columns: 598fr 66fr 205fr 323fr 49fr 106fr;
  gap: 3px;
  height: 23px;
  margin-top: 2px;
  padding: 0 2px;
}
.statusbar span {
  min-width: 0;
  height: 22px;
  padding-left: 2px;
  overflow: hidden;
  white-space: nowrap;
  line-height: 22px;
  border: 1px solid #fff;
  border-top-color: #a0a0a0;
  border-left-color: #a0a0a0;
}
.statusbar .last { display: flex; justify-content: flex-end; align-items: flex-end; }
.grip { width: 12px; height: 12px; }

.taskbar { display: flex; align-items: center; height: 24px; padding-right: 3px; }
.start { display: grid; place-items: center; width: 48px; height: 24px; background: linear-gradient(#8bbfe8, #1f5283); }
.start svg { width: 22px; height: 22px; }
.launch { display: flex; gap: 5px; margin-left: 9px; }
.launch svg { width: 22px; height: 22px; }
.pager { display: flex; gap: 1px; margin-left: 8px; }
.desk { width: 35px; height: 20px; background: #9f9f9f; }
.current { display: flex; align-items: flex-end; padding: 1px; border: 1px solid #000; border-top-width: 2px; background: #e0e0e0; }
.current b { width: 16px; height: 10px; border: 1px solid #fff; background: #8fadcb; }
.tasks { display: flex; gap: 6px; margin-left: 10px; }
.tasks svg { width: 20px; height: 20px; }
.tasks .active { background: #b5b5b5; }
.tray { display: flex; align-items: center; gap: 7px; margin-left: auto; }
.tray svg { width: 20px; height: 20px; }
.tray .big { width: 22px; height: 22px; }
.layout { width: 20px; border-radius: 3px; background: #555; color: #fff; font-size: 11px; line-height: 15px; font-weight: 700; text-align: center; }
time { margin: 0 8px 0 5px; color: #000; font-size: 13px; }
.off svg { width: 18px; height: 18px; }

.dialog {
  position: absolute;
  left: 45px;
  top: 289px;
  width: 633px;
  padding: 0 5px 7px;
  border: 1px solid #5a5a5a;
  box-shadow: inset 0 -2px #f0f0f0, inset 0 -3px #666;
  background: #e0e0e0;
}
.dlg-title {
  display: flex;
  align-items: center;
  height: 24px;
  margin: 0 -5px 6px;
  padding: 0 8px 0 6px;
  background: linear-gradient(#fff, #e0e0e0);
}
h2 { color: #5a5a5a; }
.dialog .win-buttons { color: #777; }
.dlg-main { display: flex; gap: 11px; }
.book { flex: 1; }
.tabs { display: flex; align-items: flex-end; gap: 1px; height: 31px; }
.tab {
  height: 29px;
  padding: 0 8px;
  border: 1px solid #acacac;
  border-bottom: 0;
  border-radius: 4px 4px 0 0;
  background: linear-gradient(#d8d8d8, #cdcdcd);
  color: #555;
}
.tab.selected { height: 31px; padding: 1px 3px 0; background: #e4e4e4; color: #303030; box-shadow: 0 1px #e0e0e0; }
.tab span { display: block; padding: 2px 4px; border: 1px solid #9fbcd6; border-radius: 2px; background: #d3dde6; }
.panel { height: 274px; padding: 15px 16px; border: 3px double #a9a9a9; border-radius: 0 3px 3px; }
p { margin: 0 0 10px; }
.choice { display: flex; align-items: center; gap: 6px; }
.choice input {
  flex: none;
  appearance: none;
  width: 15px;
  height: 15px;
  margin: 0;
  border: 1px solid #8a8a8a;
  border-radius: 3px;
  background: #fff;
}
.choice input[type="radio"] { border-radius: 50%; }
.panel > .choice { padding-left: 3px; }
.choice input[type="checkbox"]:checked {
  border-color: #57799a;
  background: url("data:image/svg+xml,%3Csvg xmlns='http://www.w3.org/2000/svg' viewBox='0 0 13 13'%3E%3Cpath d='M2 6l4 4 6-8' fill='none' stroke='%23364a5e' stroke-width='2.500'/%3E%3C/svg%3E") center / 13px, linear-gradient(#a6c2dc, #7fa3c6);
}
.choice input[type="radio"]:checked { border-color: #57799a; background: radial-gradient(circle, #364a5e 3px, #96b5d3 4px); }
fieldset {
  width: fit-content;
  margin: 10px 0 0;
  padding: 0 6px 2px 5px;
  border: 1px solid #c3c3c3;
  border-radius: 3px;
}
legend { padding: 0 1px; line-height: 22px; color: #484848; }
fieldset .choice + .choice { margin-top: 7px; }
.actions { width: 164px; display: flex; flex-direction: column; gap: 11px; padding-top: 16px; white-space: nowrap; }
.actions button {
  display: flex;
  justify-content: center;
  align-items: center;
  gap: 4px;
  height: 28px;
  border: 1px solid #a3a3a3;
  border-bottom-color: #858585;
  border-radius: 4px;
  background: linear-gradient(#f6f6f6, #dadada);
}
.actions button svg { width: 13px; height: 13px; }
.actions button:disabled { color: #9c9c9c; border-color: #bcbcbc; background: #e0e0e0; }
.actions hr { width: 100%; height: 2px; margin: 0; border: 0; border-top: 1px solid #b9b9b9; border-bottom: 1px solid #f5f5f5; }
.actions .choice { padding-left: 2px; }
.filename { display: flex; flex-direction: column; margin-top: 11px; }
.filename label { line-height: 16px; }
.filename input { width: 100%; height: 28px; padding: 0 4px 2px; border: 1px solid #9a9a9a; border-radius: 3px; background: #fff; }
```
